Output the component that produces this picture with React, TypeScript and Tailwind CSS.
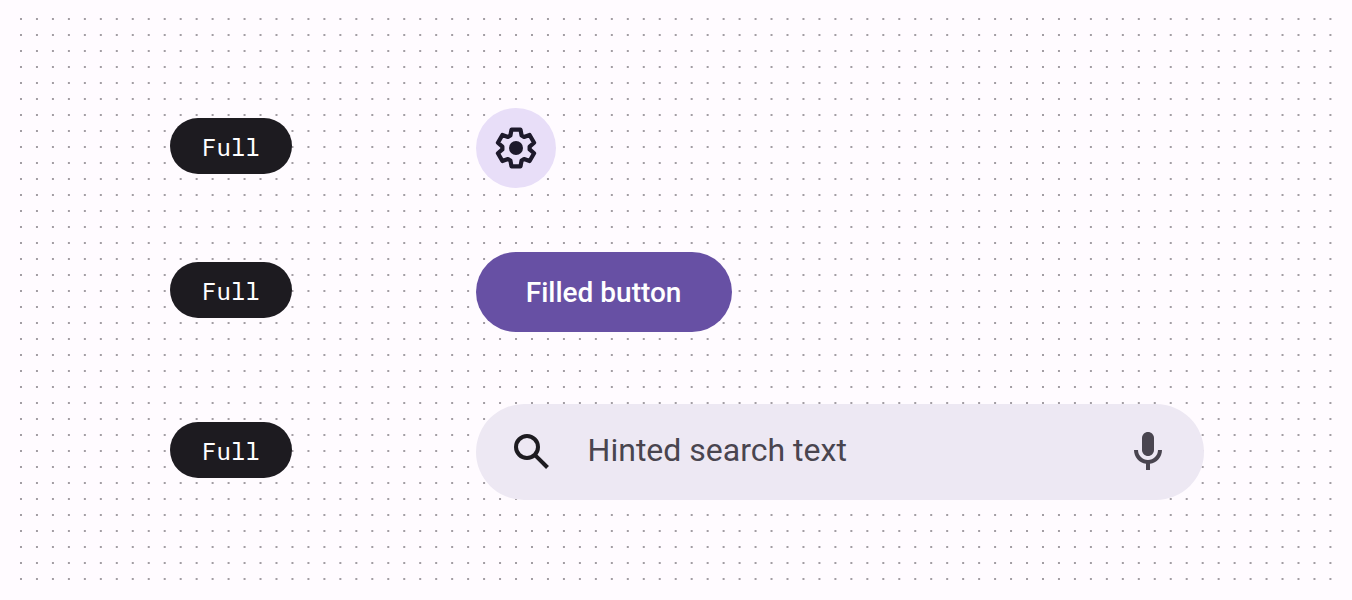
import type { ReactNode } from "react";

function GearIcon() {
  const teeth = [0, 60, 120, 180, 240, 300];
  const profile: [number, number][] = [
    [-5.6, -12.5],
    [-4.5, -18.3],
    [4.5, -18.3],
    [5.6, -12.5],
  ];
  const points = teeth
    .flatMap((deg) => {
      const a = (deg * Math.PI) / 180;
      return profile.map(
        ([x, y]) =>
          `${(x * Math.cos(a) - y * Math.sin(a)).toFixed(2)},${(x * Math.sin(a) + y * Math.cos(a)).toFixed(2)}`,
      );
    })
    .join(" ");
  return (
    <svg viewBox="-24 -24 48 48" className="size-12" aria-hidden="true">
      <polygon points={points} fill="none" stroke="currentColor" strokeWidth="4.2" strokeLinejoin="round" />
      <circle r="7" fill="currentColor" />
    </svg>
  );
}

function SearchIcon() {
  return (
    <svg
      viewBox="0 0 24 24"
      className="size-12 shrink-0 text-[#1d1b20]"
      fill="none"
      stroke="currentColor"
      strokeWidth="2"
      aria-hidden="true"
    >
      <circle cx="9.5" cy="9.5" r="5.5" />
      <path d="M13.4 13.4 19.75 19.75" />
    </svg>
  );
}

function MicIcon() {
  return (
    <svg viewBox="0 0 24 24" className="size-12" fill="currentColor" aria-hidden="true">
      <path d="M12 14c1.66 0 3-1.34 3-3V5c0-1.66-1.34-3-3-3S9 3.34 9 5v6c0 1.66 1.34 3 3 3z" />
      <path d="M17 11c0 2.76-2.24 5-5 5s-5-2.24-5-5H5c0 3.53 2.61 6.43 6 6.92V21h2v-3.08c3.39-.49 6-3.39 6-6.92h-2z" />
    </svg>
  );
}

function Row({ label, children }: { label: string; children: ReactNode }) {
  return (
    <div className="flex items-center gap-[184px]">
      <div className="shrink-0 pb-1">
        <span className="flex h-14 items-center rounded-full bg-[#1d1b20] px-8 pt-0.5 font-['Roboto_Mono','Liberation_Mono',monospace] text-2xl text-white">
          {label}
        </span>
      </div>
      <div className="flex min-w-0 flex-1">{children}</div>
    </div>
  );
}

export default function App() {
  return (
    <div className="min-h-screen bg-[#fffbff] pt-[14px] pr-2.5 pb-2.5 pl-4 font-['Roboto',sans-serif]">
      <main className="min-h-[576px] bg-[radial-gradient(circle_at_5px_5px,#a29da3_1px,transparent_1px)] bg-[length:16px_16px] bg-repeat-round pt-[94px] pr-[138px] pb-[90px] pl-[154px]">
        <div className="flex flex-col gap-16">
          <Row label="Full">
            <button
              type="button"
              aria-label="Settings"
              className="flex size-20 items-center justify-center rounded-full bg-[#e8def8] text-[#1d192b]"
            >
              <GearIcon />
            </button>
          </Row>
          <Row label="Full">
            <button
              type="button"
              className="h-20 min-w-64 rounded-full bg-[#6750a4] px-12 pt-0.5 text-[28px] font-medium text-white"
            >
              Filled button
            </button>
          </Row>
          <div className="pt-2">
            <Row label="Full">
              <div className="flex h-24 min-w-0 flex-1 items-center rounded-full bg-[#ede8f3] px-8">
                <label htmlFor="search" aria-label="Search">
                  <SearchIcon />
                </label>
                <input
                  id="search"
                  type="text"
                  placeholder="Hinted search text"
                  className="ml-8 h-12 min-w-0 flex-1 bg-transparent pb-1 text-[32px] text-[#49454f] outline-none placeholder:text-[#49454f]"
                />
                <button type="button" aria-label="Voice search" className="shrink-0 text-[#49454f]">
                  <MicIcon />
                </button>
              </div>
            </Row>
          </div>
        </div>
      </main>
    </div>
  );
}
